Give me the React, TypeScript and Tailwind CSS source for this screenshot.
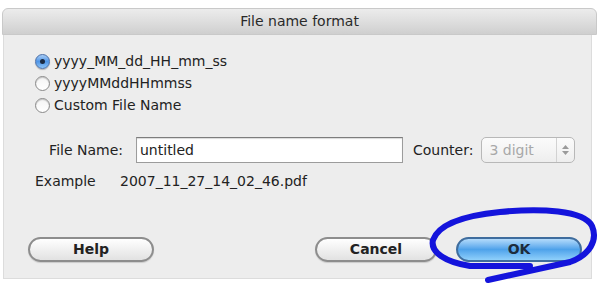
import React from "react";

const font = { fontFamily: '"Lucida Grande","DejaVu Sans","Liberation Sans",sans-serif' };

function Radio({ checked }: { checked?: boolean }) {
  if (checked) {
    return (
      <span className="w-[15px] h-[15px] rounded-full border border-[#4a6fa8] bg-gradient-to-b from-[#a9cdf5] via-[#4f95e6] to-[#8cc3f6] flex items-center justify-center shadow-[0_1px_1px_rgba(0,0,0,0.25)]">
        <span className="w-[5px] h-[5px] rounded-full bg-[#1b2a40]" />
      </span>
    );
  }
  return (
    <span className="w-[15px] h-[15px] rounded-full border border-[#8a8a8a] bg-gradient-to-b from-[#f4f4f4] to-[#ffffff] shadow-[inset_0_1px_1px_rgba(0,0,0,0.2)]" />
  );
}

function PillButton({ label, className }: { label: string; className?: string }) {
  return (
    <div
      className={
        "h-[25px] rounded-full border-2 border-[#8d8d8d] bg-gradient-to-b from-[#ffffff] via-[#f0f0f0] to-[#e2e2e2] flex items-center justify-center text-[14px] text-[#222] font-semibold shadow-[0_1px_1px_rgba(0,0,0,0.15)] " +
        (className || "")
      }
    >
      {label}
    </div>
  );
}

export default function App() {
  return (
    <div className="w-[601px] h-[284px] bg-white overflow-hidden relative" style={font}>
      <div className="pt-[8px] pl-[2px]">
        <div className="w-[595px] h-[27px] rounded-t-[6px] border border-[#c9c9c9] bg-gradient-to-b from-[#ececec] via-[#dedede] to-[#cfcfcf] flex items-center justify-center text-[14px] text-[#2a2a2a]">
          File name format
        </div>
        <div className="ml-[1px] w-[589px] h-[244px] bg-[#ededed] border-x border-b border-[#dcdcdc] pt-[19px] pl-[31px] text-[#222]">
          <div className="flex flex-col gap-[7px] text-[14px]">
            <div className="flex items-center gap-[4px] h-[15px]">
              <Radio checked />
              <span>yyyy_MM_dd_HH_mm_ss</span>
            </div>
            <div className="flex items-center gap-[4px] h-[15px]">
              <Radio />
              <span>yyyyMMddHHmmss</span>
            </div>
            <div className="flex items-center gap-[4px] h-[15px]">
              <Radio />
              <span>Custom File Name</span>
            </div>
          </div>
          <div className="flex items-center mt-[24px] h-[26px] text-[14px]">
            <span className="w-[88px] text-right">File Name:</span>
            <div className="ml-[13px] w-[267px] h-[26px] bg-white border border-[#9c9c9c] border-t-[#7d7d7d] shadow-[inset_0_1px_1px_rgba(0,0,0,0.15)] flex items-center pl-[3px]">
              untitled
            </div>
            <span className="ml-[10px]">Counter:</span>
            <div className="ml-[8px] w-[94px] h-[26px] rounded-[5px] border border-[#b8b8b8] bg-gradient-to-b from-[#fbfbfb] to-[#eeeeee] flex items-center text-[#a8a8a8]">
              <span className="pl-[7px] flex-1">3 digit</span>
              <span className="w-[18px] h-full border-l border-[#d2d2d2] flex flex-col items-center justify-center gap-[2px]">
                <svg width="7" height="4" viewBox="0 0 7 4"><path d="M0 4 L3.5 0 L7 4Z" fill="#9a9a9a" /></svg>
                <svg width="7" height="4" viewBox="0 0 7 4"><path d="M0 0 L3.5 4 L7 0Z" fill="#9a9a9a" /></svg>
              </span>
            </div>
          </div>
          <div className="flex items-center mt-[9px] h-[18px] text-[14px]">
            <span className="w-[85px]">Example</span>
            <span>2007_11_27_14_02_46.pdf</span>
          </div>
          <div className="flex items-center mt-[47px]">
            <PillButton label="Help" className="w-[126px] -ml-[7px]" />
            <PillButton label="Cancel" className="w-[122px] ml-[161px]" />
            <div className="ml-[19px] w-[126px] h-[25px] rounded-full border-2 border-[#3f6d9e] bg-gradient-to-b from-[#b3dbfb] via-[#4ea2ea] to-[#8fd0fb] flex items-center justify-center text-[14px] text-[#1d2c3c] font-semibold">
              OK
            </div>
          </div>
        </div>
      </div>
      <svg className="absolute left-0 top-0" width="601" height="284" viewBox="0 0 601 284">
        <path
          d="M488 280 L570 262 C590 255 598 240 592 226 C584 210 540 208 500 212 C460 216 438 226 433 240 C430 252 445 262 470 266 L530 266"
          fill="none"
          stroke="#1414dc"
          strokeWidth="6"
          strokeLinecap="round"
        />
      </svg>
    </div>
  );
}
